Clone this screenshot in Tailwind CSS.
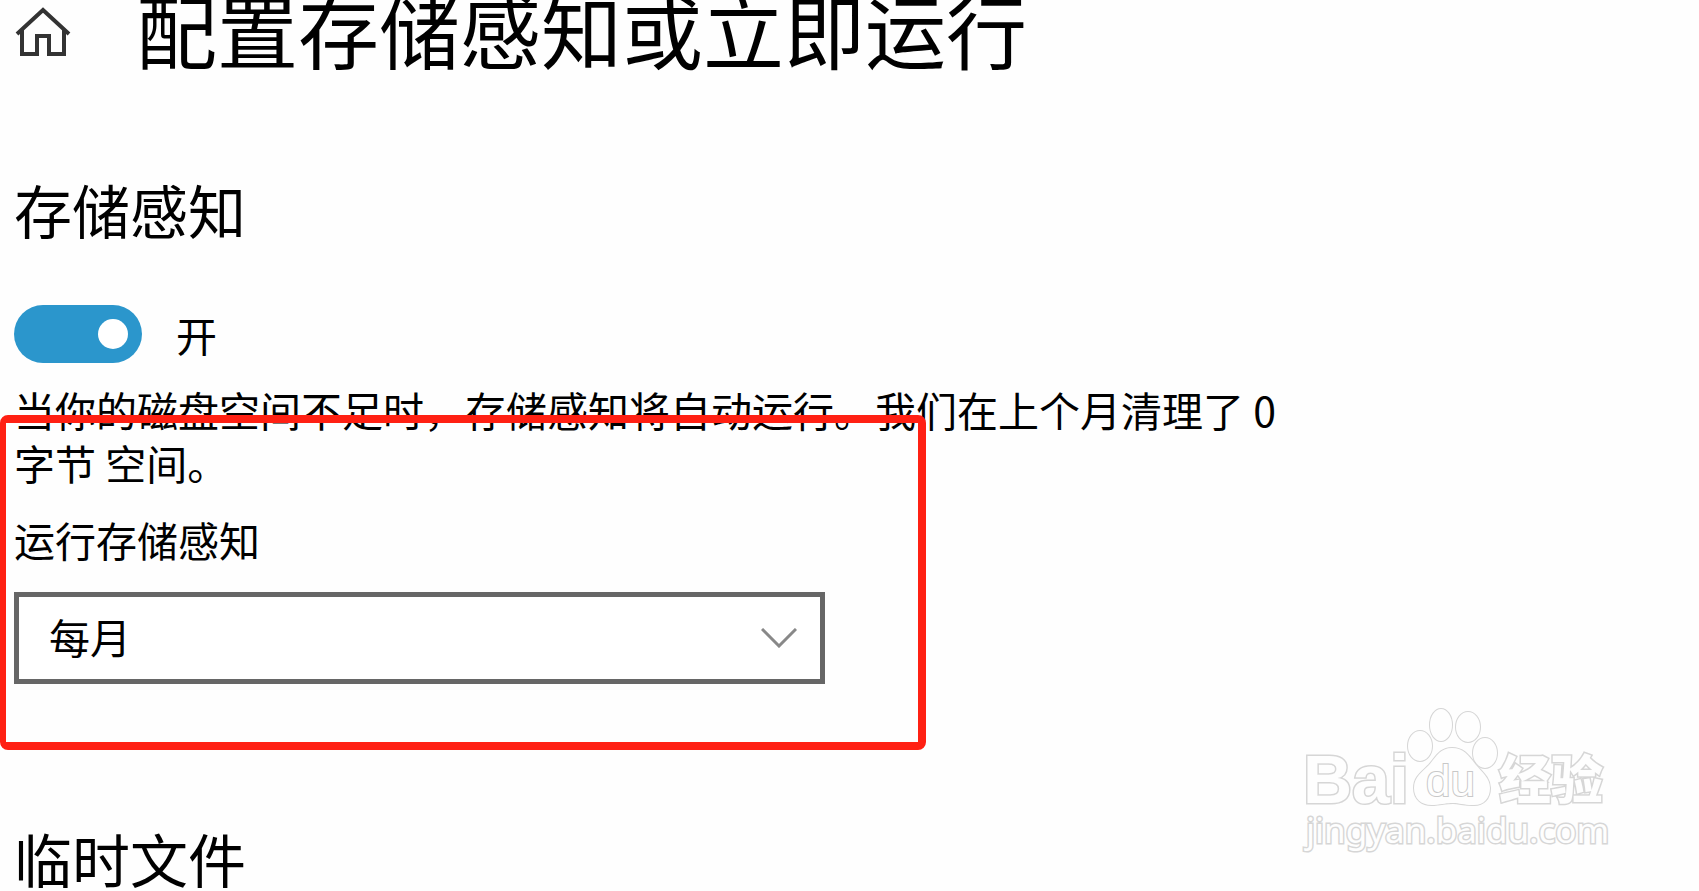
<!DOCTYPE html>
<html lang="zh-Hans">
<head>
    <meta charset="UTF-8">
    <meta name="viewport" content="width=device-width, initial-scale=1.0">
    <title>配置存储感知或立即运行</title>
    <script src="https://cdn.jsdelivr.net/npm/@tailwindcss/browser@4"></script>
    <style>
        body {
            font-family: 'Noto Sans CJK SC', sans-serif;
        }
    </style>
</head>
<body class="bg-[#fefefe] text-black">

    <div class="relative min-h-screen overflow-hidden px-[14px]">

        <!-- 标题栏 -->
        <header class="flex h-14 items-center">
            <a href="#" aria-label="主页" class="shrink-0">
                <svg class="h-14 w-[60px]" viewBox="0 0 60 56" fill="none" stroke="#333" stroke-width="4">
                    <path d="M3 34 29 10 55 34"/>
                    <path d="M8 30V54H23V36H35V54H50V30"/>
                </svg>
            </a>
            <h1 class="ml-[62px] whitespace-nowrap text-[81px] leading-[80px]">配置存储感知或立即运行</h1>
        </header>

        <main>
            <h2 class="mt-[121px] text-[58px] leading-[64px]">存储感知</h2>

            <div class="mt-16 flex items-center gap-[34px]">
                <input id="sense" type="checkbox" role="switch" checked class="relative h-[58px] w-32 shrink-0 appearance-none rounded-full bg-[#2b96cc] before:absolute before:top-[14px] before:right-[14px] before:size-[30px] before:rounded-full before:bg-white before:content-['']">
                <label for="sense" class="text-[41px] leading-[53px]">开</label>
            </div>

            <p class="mt-5 max-w-[1270px] text-[41px] leading-[53px]">当你的磁盘空间不足时，存储感知将自动运行。我们在上个月清理了 0 <br>字节 空间。</p>

            <label for="frequency" class="mt-6 block text-[41px] leading-[53px]">运行存储感知</label>
            <div class="relative mt-[26px] w-[811px] max-w-full">
                <select id="frequency" class="block h-[92px] w-full appearance-none border-[5px] border-[#666] bg-white pb-1 pl-[30px] text-[41px] leading-[53px]">
                    <option>每天</option>
                    <option>每周</option>
                    <option selected>每月</option>
                </select>
                <svg class="pointer-events-none absolute top-9 right-7 h-5 w-9" viewBox="0 0 36 20" fill="none" stroke="#888" stroke-width="3">
                    <path d="M1 1 18 18 35 1"/>
                </svg>
            </div>

            <h2 class="mt-[142px] text-[58px] leading-[64px]">临时文件</h2>
        </main>

        <!-- 红色标注框 -->
        <div class="pointer-events-none absolute top-[415px] left-0 h-[335px] w-[926px] rounded-lg border-8 border-l-6 border-[#ff2013]"></div>

        <!-- 水印 -->
        <svg class="pointer-events-none absolute right-[69px] bottom-[21px] h-[180px] w-[350px]" viewBox="0 0 350 180" fill="#fefefe" stroke="#d6d6d6" stroke-width="2" paint-order="stroke">
            <text x="23" y="113" font-family="Liberation Sans, sans-serif" font-weight="700" font-size="68" stroke-width="3">Bai</text>
            <ellipse cx="140" cy="56" rx="12" ry="15"/>
            <ellipse cx="161" cy="35" rx="11" ry="16"/>
            <ellipse cx="188" cy="37" rx="12" ry="15"/>
            <ellipse cx="205" cy="63" rx="12" ry="15"/>
            <path d="M172 58C160 58 156 67 149 75C142 82 134 87 134 98C134 109 142 116 154 115C163 114 167 113 173 113C179 113 184 115 192 115C204 116 210 108 210 98C210 88 202 82 196 75C189 66 184 58 172 58Z"/>
            <text x="146" y="106" font-family="Liberation Sans, sans-serif" font-size="44" stroke="#c8c8c8">du</text>
            <text x="219" y="109" font-family="Noto Sans CJK SC, sans-serif" font-weight="900" font-size="52" stroke-width="3">经验</text>
            <text x="26" y="153" font-family="Noto Sans, sans-serif" font-size="35" stroke-width="3">jingyan.baidu.com</text>
        </svg>
    </div>

</body>
</html>
